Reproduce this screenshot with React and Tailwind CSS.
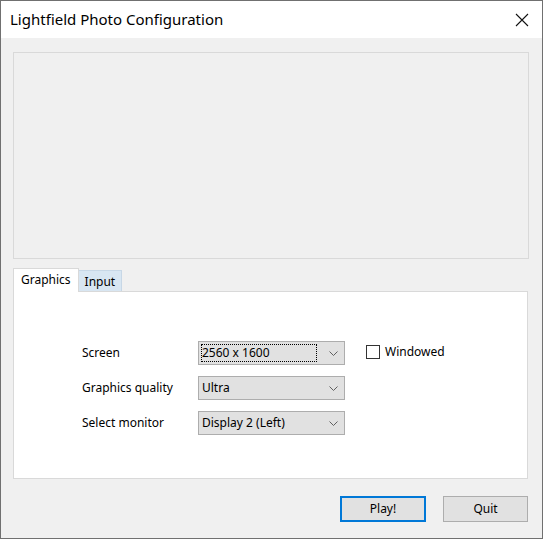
import React from 'react';

function Chevron() {
  return (
    <svg width="9" height="5" viewBox="0 0 9 5" className="shrink-0">
      <path d="M0.5 0.5 L4.5 4.5 L8.5 0.5" fill="none" stroke="#606060" strokeWidth="1" />
    </svg>
  );
}

function Combo({ value, focused }) {
  return (
    <div className="w-[147px] h-[24px] bg-[#e1e1e1] border border-[#adadad] flex items-center pl-[2px] pr-[6px]">
      <div className={`flex-1 h-[18px] flex items-center pl-px mr-[12px] ${focused ? 'outline outline-1 outline-dotted outline-black -outline-offset-1' : ''}`}>
        <span className="leading-none">{value}</span>
      </div>
      <Chevron />
    </div>
  );
}

export default function App() {
  const rows = [
    { label: 'Screen', value: '2560 x 1600', focused: true },
    { label: 'Graphics quality', value: 'Ultra' },
    { label: 'Select monitor', value: 'Display 2 (Left)' },
  ];

  return (
    <div
      className="w-[543px] h-[539px] border border-[#707070] bg-[#f0f0f0] flex flex-col text-[12px] text-black"
      style={{ fontFamily: '"Noto Sans", "Open Sans", sans-serif' }}
    >
      <div className="h-[37px] bg-white flex items-center justify-between pl-[9px] pr-[13px] shrink-0">
        <span className="text-[15px] leading-none">Lightfield Photo Configuration</span>
        <svg width="14" height="14" viewBox="0 0 14 14">
          <path d="M1 1 L13 13 M13 1 L1 13" stroke="#111" strokeWidth="1.1" />
        </svg>
      </div>

      <div className="flex flex-col pl-[12px] pr-[13px] pt-[14px]">
        <div className="h-[207px] border border-[#d9d9d9] bg-[#f0f0f0]" />

        <div className="mt-[8px] flex items-end h-[24px] relative z-10">
          <div className="h-[24px] bg-white border border-b-0 border-[#d9d9d9] px-[7px] flex items-center -mb-px">
            <span className="leading-none -mt-[2px]">Graphics</span>
          </div>
          <div className="h-[21px] bg-[#d8e6f2] border border-l-0 border-b-0 border-[#c7d7e6] px-[6px] flex items-center pt-[2px]">
            <span className="leading-none">Input</span>
          </div>
        </div>

        <div className="w-[515px] h-[188px] bg-white border border-[#d9d9d9] pl-[68px] pt-[49px] flex flex-col gap-[11px]">
          {rows.map((r) => (
            <div key={r.label} className="flex items-center">
              <span className="w-[116px] leading-none">{r.label}</span>
              <Combo value={r.value} focused={r.focused} />
              {r.focused && (
                <div className="ml-[21px] flex items-center gap-[5px] -mt-[3px]">
                  <div className="w-[14px] h-[14px] border border-[#333] bg-white" />
                  <span className="leading-none">Windowed</span>
                </div>
              )}
            </div>
          ))}
        </div>

        <div className="mt-[17px] flex justify-end gap-[17px] pr-[1px]">
          <button className="w-[86px] h-[26px] bg-[#e1e1e1] border-2 border-[#0078d7] leading-none">Play!</button>
          <button className="w-[85px] h-[26px] bg-[#e1e1e1] border border-[#adadad] leading-none">Quit</button>
        </div>
      </div>
    </div>
  );
}
